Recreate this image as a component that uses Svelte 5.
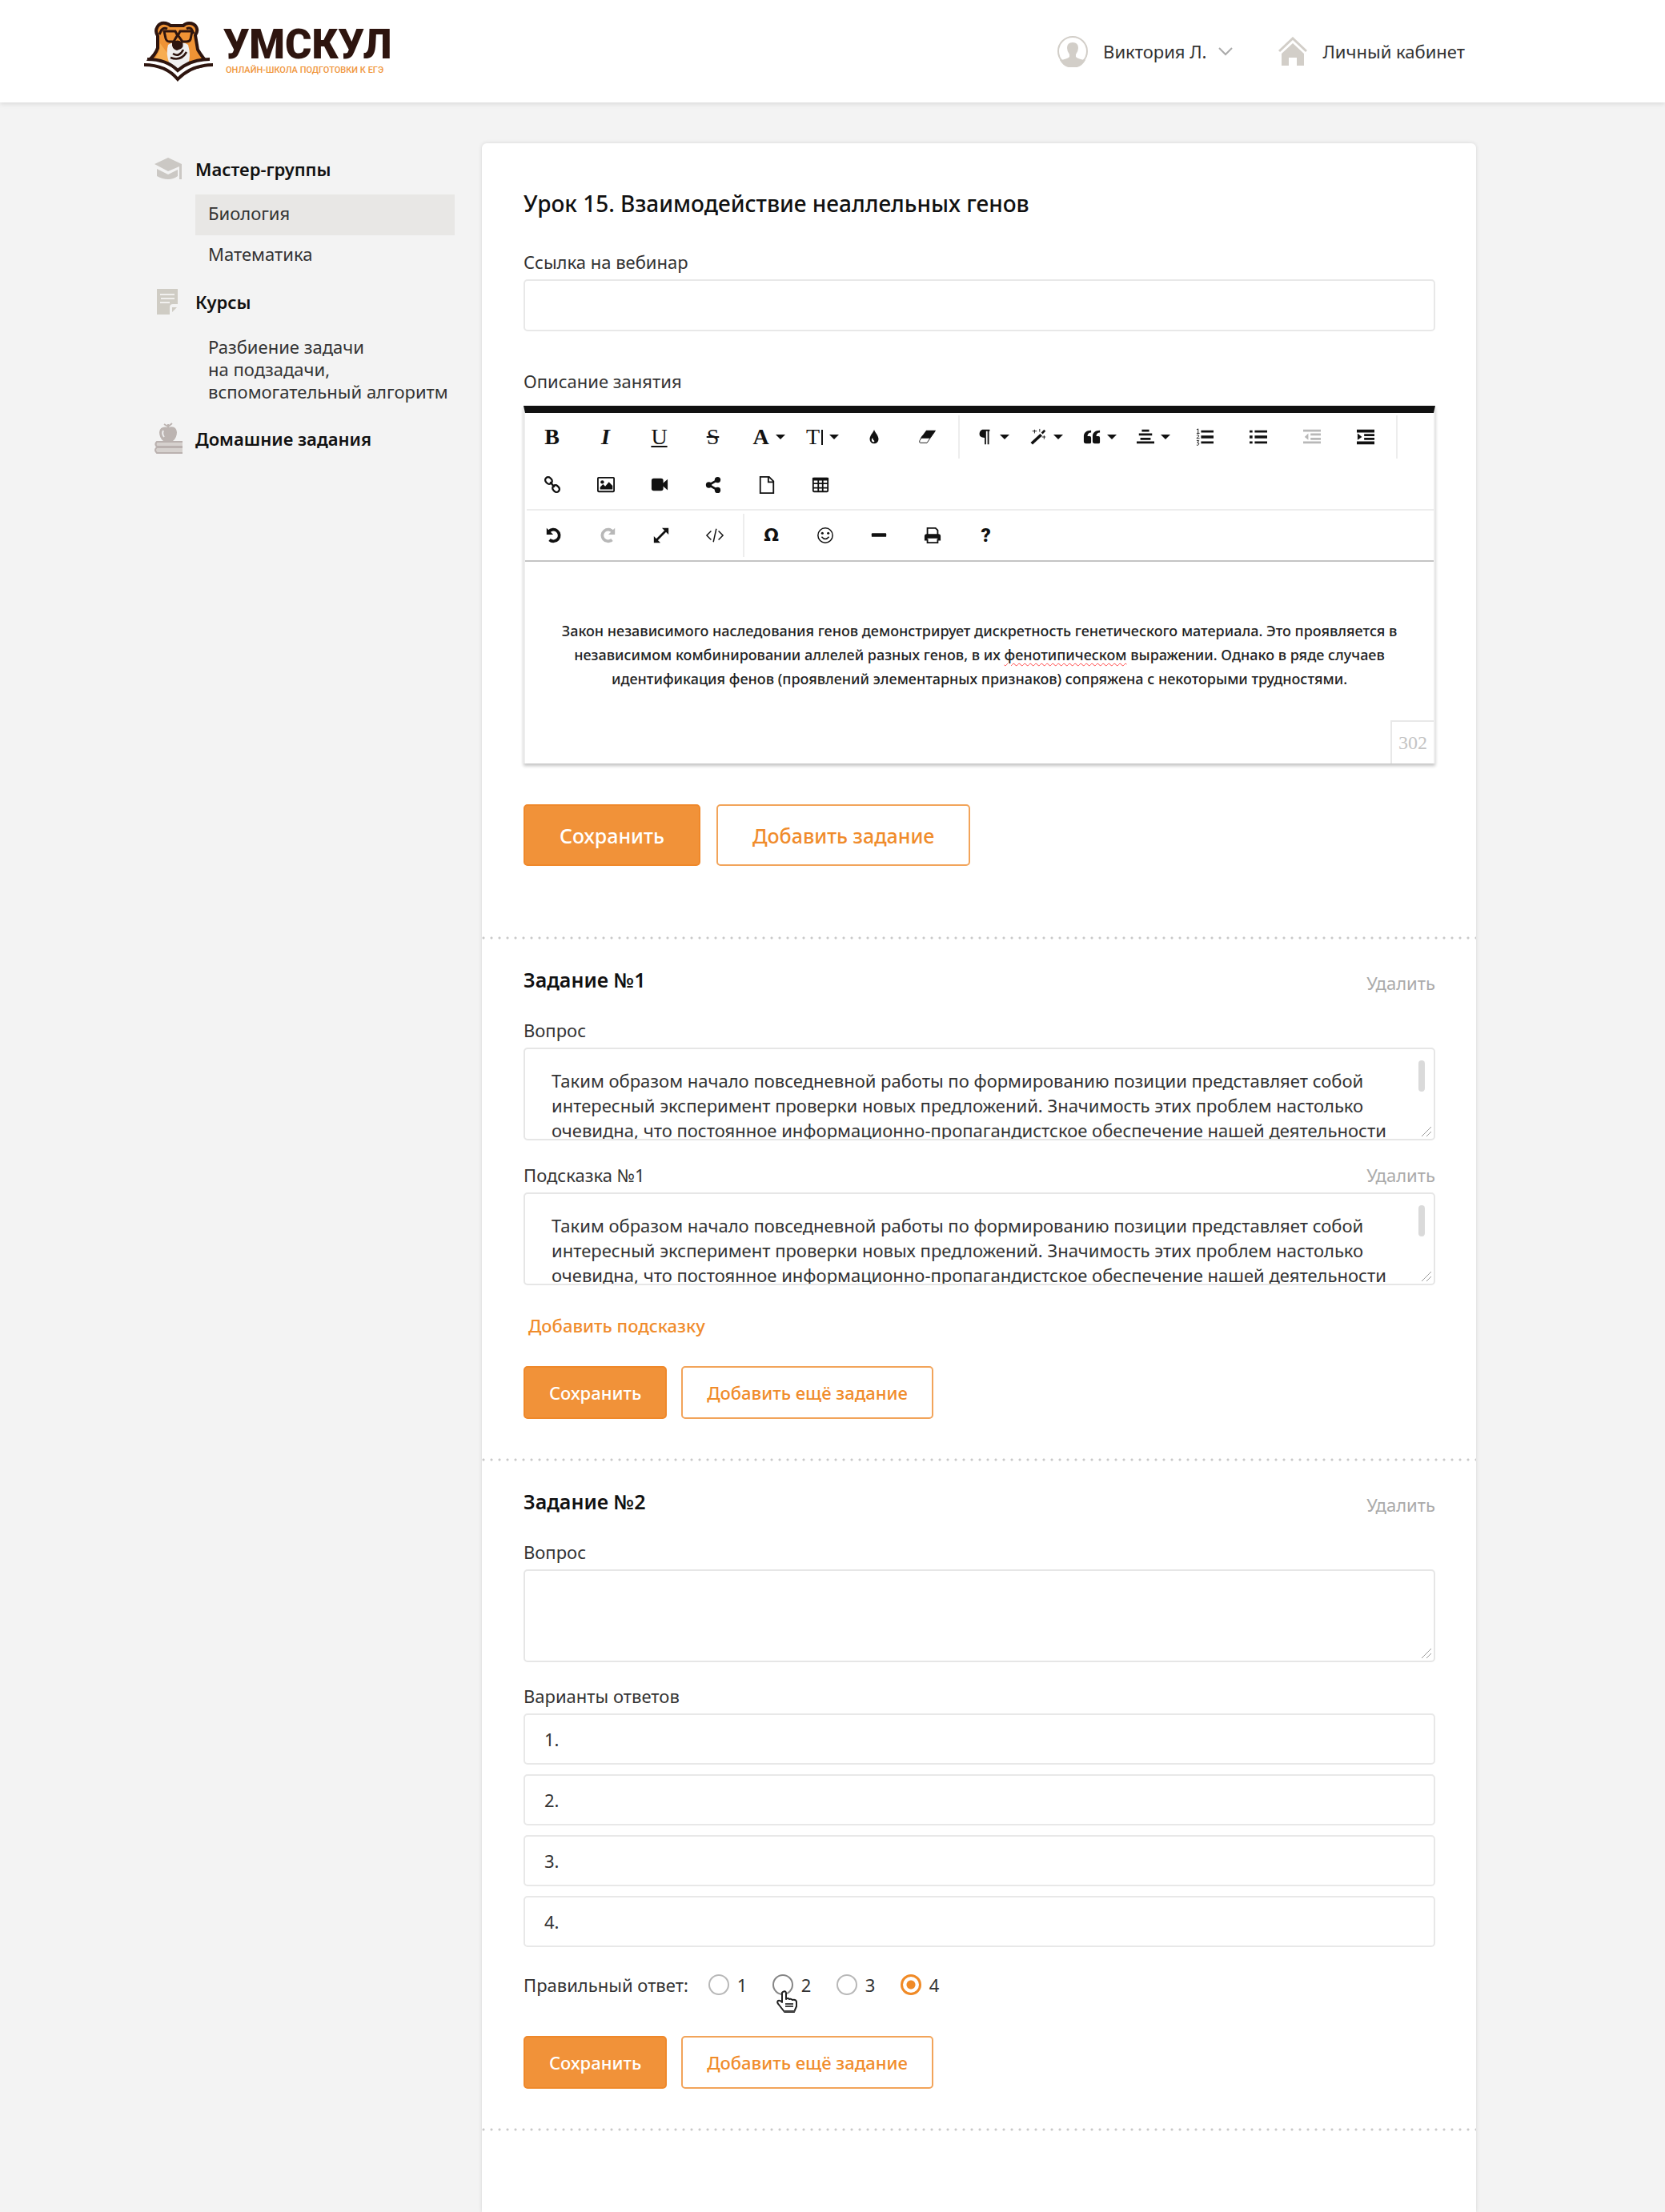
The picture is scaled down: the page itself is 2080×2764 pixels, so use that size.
<script>
  const rowOne = [
    { id: 'bold', label: 'Полужирный' },
    { id: 'italic', label: 'Курсив' },
    { id: 'underline', label: 'Подчёркнутый' },
    { id: 'strike', label: 'Зачёркнутый' },
    { id: 'font', label: 'Шрифт', menu: true },
    { id: 'size', label: 'Размер шрифта', menu: true },
    { id: 'drop', label: 'Цвет' },
    { id: 'eraser', label: 'Очистить' },
    { id: 'sep' },
    { id: 'para', label: 'Формат абзаца', menu: true },
    { id: 'wand', label: 'Стиль абзаца', menu: true },
    { id: 'quote', label: 'Цитата', menu: true },
    { id: 'align', label: 'Выравнивание', menu: true },
    { id: 'ol', label: 'Нумерованный список' },
    { id: 'ul', label: 'Маркированный список' },
    { id: 'outdent', label: 'Уменьшить отступ', off: true },
    { id: 'indent', label: 'Увеличить отступ' },
    { id: 'sep' }
  ];
  const rowTwo = [
    { id: 'link', label: 'Ссылка' },
    { id: 'image', label: 'Изображение' },
    { id: 'video', label: 'Видео' },
    { id: 'share', label: 'Встроить' },
    { id: 'file', label: 'Файл' },
    { id: 'table', label: 'Таблица' }
  ];
  const rowThree = [
    { id: 'undo', label: 'Отменить' },
    { id: 'redo', label: 'Повторить', off: true },
    { id: 'expand', label: 'На весь экран' },
    { id: 'code', label: 'HTML' },
    { id: 'sep', tight: true },
    { id: 'omega', label: 'Символы' },
    { id: 'smile', label: 'Смайлы' },
    { id: 'hr', label: 'Линия' },
    { id: 'print', label: 'Печать' },
    { id: 'help', label: 'Справка' }
  ];
  const letters = { bold: 'B', italic: 'I', underline: 'U', strike: 'S', font: 'A', size: 'T', omega: 'Ω', help: '?' };

  const sample =
    'Таким образом начало повседневной работы по формированию позиции представляет собой\nинтересный эксперимент проверки новых предложений. Значимость этих проблем настолько\nочевидна, что постоянное информационно-пропагандистское обеспечение нашей деятельности';

  let question1 = $state(sample);
  let hint1 = $state(sample);
  let question2 = $state('');
  let answers = $state(['', '', '', '']);
  let correct = $state(4);
</script>

{#snippet glyph(id)}
  {#if letters[id]}
    <span class="letter {id}">{letters[id]}{#if id === 'size'}<i></i>{/if}</span>
  {:else}
    <svg class="glyph" viewBox="0 0 24 24" aria-hidden="true">
      {#if id === 'drop'}
        <path fill-rule="evenodd" d="M12 2c1 4 6 8 6 13a6 6 0 0 1-12 0c0-5 5-9 6-13zM10 13c-2 2-2 5 1 6 1 0 2-1 1-2-1-1-2-2-2-4z" />
      {:else if id === 'eraser'}
        <path d="M10 3h13l-8 11H2z" /><path class="line thin" d="M5 10L1 17q-1 3 1 3h9l4-6 7-10" />
      {:else if id === 'para'}
        <path d="M10 2h9v2h-1v18h-2V4h-2v18h-2v-9C7 13 5 11 5 8s2-6 5-6z" />
      {:else if id === 'wand'}
        <path class="line heavy" d="M3 21L16 9" /><path class="line" d="M17 7l4-4" /><path class="line thin" d="M7 2v5M4 4h6M14 1v4M20 10v5M17 12h5" />
      {:else if id === 'quote'}
        <path d="M11 3v3C8 6 6 8 6 11h3q2 0 2 2v6q0 2-2 2H4q-3 0-3-3v-7c0-5 4-8 10-8zM23 3v3c-3 0-5 2-5 5h3q2 0 2 2v6q0 2-2 2h-5q-3 0-3-3v-7c0-5 4-8 10-8z" />
      {:else if id === 'align'}
        <path d="M7 2h10v3H7zM3 7h18v3H3zM5 13h14v3H5zM0 18h24v3H0z" />
      {:else if id === 'ol'}
        <path d="M7 3h17v3H7zM7 10h17v4H7zM7 18h17v3H7z" /><path class="line thin" d="M1 2l2-1v6M1 7h4M1 10q3-2 3 1l-3 3h4M1 17h3l-2 3q3 0 2 2t-3 1" />
      {:else if id === 'ul'}
        <path d="M7 3h17v3H7zM7 10h17v4H7zM7 18h17v3H7zM0 3h4v3H0zM0 10h4v4H0zM0 18h4v3H0z" />
      {:else if id === 'outdent'}
        <path d="M0 2h24v3H0zM10 7h14v3H10zM10 13h14v3H10zM0 18h24v3H0zM7 7v9l-5-4z" />
      {:else if id === 'indent'}
        <path d="M0 2h24v4H0zM10 8h14v3H10zM10 13h14v3H10zM0 18h24v4H0zM1 7v9l6-4z" />
      {:else if id === 'link'}
        <g class="line link"><rect x="-5" y="-4" width="10" height="8" rx="4" transform="translate(7 6) rotate(45)" /><rect x="-5" y="-4" width="10" height="8" rx="4" transform="translate(17 17) rotate(45)" /><path d="M9 8l6 7" /></g>
      {:else if id === 'image'}
        <rect class="line mid" x="1" y="2" width="22" height="19" rx="1" /><circle cx="7" cy="8" r="2.4" /><path d="M4 18v-3l4-4 3 3 5-6 5 5v5z" />
      {:else if id === 'video'}
        <rect x="1" y="3" width="16" height="17" rx="3" /><path d="M16 10l7-6v15l-7-6z" />
      {:else if id === 'share'}
        <circle cx="6" cy="12" r="4" /><circle cx="18" cy="5" r="4" /><circle cx="18" cy="19" r="4" /><path class="line" d="M18 5L6 12l12 7" />
      {:else if id === 'file'}
        <path class="line mid" d="M3 1h12l6 6v16H3zM14 1v7h7" />
      {:else if id === 'table'}
        <rect class="line mid" x="2" y="3" width="20" height="18" rx="1" /><path d="M1 2h22v4H1z" /><path class="line mid" d="M2 10h20M2 16h20M9 4v17M15 4v17" />
      {:else if id === 'undo'}
        <path class="line heavy" d="M5 7a8 8 0 1 1 1 11" /><path d="M2 2v9h9z" />
      {:else if id === 'redo'}
        <path class="line heavy" d="M19 7a8 8 0 1 0-1 11" /><path d="M22 2v9h-9z" />
      {:else if id === 'expand'}
        <path class="line" d="M5 19L19 5" /><path d="M13 2h9v9zM2 13v9h9z" />
      {:else if id === 'code'}
        <path class="line slim" d="M7 6l-6 6 6 6M17 6l6 6-6 6M14 3l-4 18" />
      {:else if id === 'smile'}
        <circle class="line slim" cx="12" cy="12" r="10" /><path class="line slim" d="M7 14q5 6 10 0" /><circle cx="8" cy="9" r="1.7" /><circle cx="16" cy="9" r="1.7" />
      {:else if id === 'hr'}
        <rect x="2" y="9" width="20" height="5" rx="1" />
      {:else if id === 'print'}
        <path class="line mid" d="M5 12V2h11l3 3v7M5 17v5h14v-5" /><path fill-rule="evenodd" d="M4 10h16q3 0 3 3v6h-4v-3H5v3H1v-6q0-3 3-3z" />
      {/if}
    </svg>
  {/if}
{/snippet}

{#snippet tools(list)}
  {#each list as t}
    {#if t.id === 'sep'}
      <span class="sep" class:tight={t.tight}></span>
    {:else}
      <button type="button" class="tool" class:menu={t.menu} disabled={t.off} aria-label={t.label}>
        {@render glyph(t.id)}
        {#if t.menu}<span class="caret"></span>{/if}
      </button>
    {/if}
  {/each}
{/snippet}

{#snippet grip()}
  <svg class="grip" viewBox="0 0 16 16" aria-hidden="true"><path d="M2 14L14 2M8 14l6-6" /></svg>
{/snippet}

<header class="top">
  <a class="logo" href="#home">
    <svg class="bear" viewBox="0 0 86 76" aria-hidden="true">
      <path d="M17 19C12 11 18 1 27 3q4 1 6 3h16q3-3 7-3c9 0 13 8 8 15l3 18q4 7 13 18L43 64 5 50q9-7 12-16z" fill="#ef9335" stroke="#2e150f" stroke-width="4" stroke-linejoin="round" />
      <path d="M20 28q1 12-10 23l14 6 16 6-9-20z" fill="#f7ad50" />
      <path d="M19 17l3-6q3-3 7-1M62 16l-3-6q-3-2-6 0" fill="none" stroke="#2e150f" stroke-width="3" />
      <path d="M30 30q6-5 13 0 6-5 12 0 4 14 0 24-5 10-11 10T31 52q-4-12-1-22z" fill="#f0efef" />
      <path d="M25 13h14l2 4h2l2-4h15l-2 10q-1 3-5 3h-5l-5-7h-2l-4 7h-5q-4 0-5-4z" fill="#ef9335" stroke="#2e150f" stroke-width="3" />
      <path d="M35 27q7-5 13 0 2 5-2 8l-5 2q-7-2-6-10z" fill="#2e150f" />
      <path d="M36 41q8 5 13-5M33 46q13 5 20-7" fill="none" stroke="#2e150f" stroke-width="2.5" />
      <path d="M1 50q25-3 41 12 18-15 43-12v5Q59 57 42 73 26 56 1 55z" fill="#fff" />
      <path d="M4 48q24 0 38 14 16-14 40-14M0 55q27 0 42 18 17-18 44-18" fill="none" stroke="#2e150f" stroke-width="4" />
    </svg>
    <span class="brand">
      <strong>УМСКУЛ</strong>
      <small>ОНЛАЙН-ШКОЛА ПОДГОТОВКИ К ЕГЭ</small>
    </span>
  </a>
  <nav class="account" aria-label="Аккаунт">
    <button type="button" class="user">
      <svg class="avatar" viewBox="0 0 40 40" aria-hidden="true">
        <circle cx="20" cy="20" r="18" fill="none" stroke="#d2cec8" stroke-width="2" />
        <path fill="#d2cec8" d="M4 31q9-1 12-4v-3q-3-4-3-8 0-7 7-7t7 7q0 4-3 8v3q3 3 12 4a18 18 0 0 1-32 0z" />
      </svg>
      <span>Виктория Л.</span>
      <svg class="chev" viewBox="0 0 18 12" aria-hidden="true"><path d="M1 2l8 8 8-8" fill="none" stroke="#aaa" stroke-width="2" /></svg>
    </button>
    <a class="cabinet" href="#cabinet">
      <svg class="house" viewBox="0 0 36 36" aria-hidden="true">
        <path d="M1 18L18 2l17 16" fill="none" stroke="#d2cec8" stroke-width="3" />
        <path d="M18 8l14 13v15h-9V26H13v10H4V21z" fill="#d2cec8" />
      </svg>
      <span>Личный кабинет</span>
    </a>
  </nav>
</header>

<div class="page">
  <nav class="side" aria-label="Разделы">
    <section class="group">
      <h2>
        <svg class="sico" viewBox="0 0 36 36" aria-hidden="true">
          <path fill="#cbc8c4" d="M18 4l17 8v19h-3V15l-14 6L1 12zM4 18l14 7 12-6v8q-5 4-12 4T4 27z" />
        </svg>
        Мастер-группы
      </h2>
      <a class="item current" href="#bio">Биология</a>
      <a class="item" href="#math">Математика</a>
    </section>
    <section class="group">
      <h2>
        <svg class="sico" viewBox="0 0 36 36" aria-hidden="true">
          <path fill="#cfccc4" d="M4 2h26v19h-6q-4 0-4 4v9H4zM23 25h6l-6 6z" />
          <path d="M8 9h18M9 14h17M8 19h12" stroke="#f1f0ee" stroke-width="2" />
        </svg>
        Курсы
      </h2>
      <a class="item multi" href="#course">Разбиение задачи<br />на подзадачи,<br />вспомогательный алгоритм</a>
    </section>
    <section class="group">
      <h2>
        <svg class="sico tall" viewBox="0 0 36 40" aria-hidden="true">
          <path fill="#bcb4b1" d="M18 6q10-3 11 6 0 7-5 11H12Q7 19 7 12 8 4 18 6z" />
          <path d="M18 6V2M13 2l5 3 5-4" fill="none" stroke="#bcb4b1" stroke-width="2" />
          <path d="M12 10q-2 4 1 8" fill="none" stroke="#eee" stroke-width="2" />
          <path fill="#d6d1ce" d="M3 24h33v14H3q-4-3 0-7-3-4 0-7z" />
          <path d="M36 24H4q-3 3 0 6h32M36 31H4q-4 3 0 7h32" fill="none" stroke="#bab1af" stroke-width="2" />
        </svg>
        Домашние задания
      </h2>
    </section>
  </nav>

  <main class="card">
    <section class="lesson">
      <h1>Урок 15. Взаимодействие неаллельных генов</h1>
      <label class="lab" for="webinar">Ссылка на вебинар</label>
      <input class="field" id="webinar" type="text" />
      <p class="lab desc" id="desc-label">Описание занятия</p>
      <div class="editor">
        <div class="toolbar" role="toolbar" aria-label="Форматирование">
          <div class="trow">{@render tools(rowOne)}</div>
          <div class="trow">{@render tools(rowTwo)}</div>
          <div class="trow last">{@render tools(rowThree)}</div>
        </div>
        <div class="area" role="textbox" tabindex="0" contenteditable="true" aria-labelledby="desc-label">
          Закон независимого наследования генов демонстрирует дискретность генетического материала. Это проявляется в<br />независимом комбинировании аллелей разных генов, в их <span class="typo">фенотипическом</span> выражении. Однако в ряде случаев<br />идентификация фенов (проявлений элементарных признаков) сопряжена с некоторыми трудностями.
        </div>
        <span class="count">302</span>
      </div>
      <div class="actions big">
        <button type="button" class="btn fill">Сохранить</button>
        <button type="button" class="btn">Добавить задание</button>
      </div>
    </section>

    <section class="task">
      <div class="head">
        <h2>Задание №1</h2>
        <button type="button" class="del">Удалить</button>
      </div>
      <label class="lab" for="q1">Вопрос</label>
      <div class="box"><textarea id="q1" bind:value={question1}></textarea><i class="thumb"></i>{@render grip()}</div>
      <div class="between">
        <label class="lab" for="h1">Подсказка №1</label>
        <button type="button" class="del">Удалить</button>
      </div>
      <div class="box"><textarea id="h1" bind:value={hint1}></textarea><i class="thumb"></i>{@render grip()}</div>
      <button type="button" class="addhint">Добавить подсказку</button>
      <div class="actions">
        <button type="button" class="btn fill">Сохранить</button>
        <button type="button" class="btn">Добавить ещё задание</button>
      </div>
    </section>

    <section class="task">
      <div class="head">
        <h2>Задание №2</h2>
        <button type="button" class="del">Удалить</button>
      </div>
      <label class="lab" for="q2">Вопрос</label>
      <div class="box"><textarea id="q2" bind:value={question2}></textarea>{@render grip()}</div>
      <p class="lab variants">Варианты ответов</p>
      <div class="answers">
        {#each answers as _, i}
          <label class="answer"><span>{i + 1}.</span><input type="text" bind:value={answers[i]} /></label>
        {/each}
      </div>
      <fieldset class="right">
        <legend>Правильный ответ:</legend>
        {#each [1, 2, 3, 4] as n}
          <label class="opt" class:hot={n === 2}>
            <input type="radio" name="right" value={n} bind:group={correct} />{n}
            {#if n === 2}
              <svg class="hand" viewBox="0 0 26 28" aria-hidden="true">
                <path d="M8 2q3-2 4 1v8q2-2 4 0 2-1 4 1 4-1 5 2v6l-3 7H10L3 18q-3-3-1-5 3-1 5 2V3z" fill="#fff" stroke="#222" stroke-width="2" stroke-linejoin="round" />
                <path d="M11 17h10M11 20h10M9 26h14" stroke="#444" stroke-width="2" fill="none" />
              </svg>
            {/if}
          </label>
        {/each}
      </fieldset>
      <div class="actions">
        <button type="button" class="btn fill">Сохранить</button>
        <button type="button" class="btn">Добавить ещё задание</button>
      </div>
    </section>
    <section class="task"></section>
  </main>
</div>

<style>
  :global(body) {
    background: #f3f3f3;
    color: #333;
    font: 22px/30px 'Noto Sans', 'Open Sans', sans-serif;
  }
  :global(#app) {
    display: flex;
    flex-direction: column;
    min-height: 100vh;
  }
  h1, h2, p, fieldset { margin: 0; padding: 0; border: 0; }
  a { color: inherit; text-decoration: none; }
  button, input, textarea { font: inherit; color: inherit; box-sizing: border-box; margin: 0; }
  button { background: none; border: 0; padding: 0; cursor: pointer; white-space: nowrap; }
  svg { display: block; flex: none; }

  .top {
    display: flex;
    align-items: center;
    justify-content: space-between;
    height: 128px;
    padding: 0 250px 0 180px;
    background: #fff;
    box-shadow: 0 2px 6px rgba(0, 0, 0, 0.1);
    box-sizing: border-box;
  }
  .logo { display: flex; gap: 13px; align-items: center; }
  .bear { width: 86px; height: 76px; }
  .brand { display: flex; flex-direction: column; }
  .brand strong { font: 900 51px/48px Roboto, sans-serif; color: #2e150f; }
  .brand small { font: 500 11px/16px Roboto, sans-serif; color: #f0963c; padding-left: 3px; }
  .account { display: flex; align-items: center; gap: 57px; }
  .user, .cabinet { display: flex; align-items: center; }
  .avatar { width: 40px; height: 40px; margin-right: 18px; }
  .chev { width: 18px; height: 12px; margin-left: 14px; }
  .house { width: 36px; height: 36px; margin-right: 20px; }

  .page {
    flex: 1;
    display: grid;
    grid-template-columns: 376px 1fr;
    gap: 34px;
    padding: 51px 236px 0 192px;
  }
  .side { display: flex; flex-direction: column; gap: 16px; padding-top: 16px; }
  .group { display: flex; flex-direction: column; }
  .side h2 {
    display: flex;
    align-items: center;
    gap: 16px;
    height: 32px;
    margin-bottom: 16px;
    font-size: 22px;
    font-weight: 600;
    color: #111;
  }
  .sico { width: 36px; height: 36px; }
  .sico.tall { height: 40px; }
  .item { margin-left: 52px; padding: 8px 16px 13px; }
  .item.current { background: #e8e7e5; }
  .item.multi { line-height: 28px; white-space: nowrap; padding: 10px 16px 13px; }

  .card {
    background: #fff;
    border-radius: 6px 6px 0 0;
    box-shadow: 0 0 5px rgba(0, 0, 0, 0.12);
    min-width: 0;
  }
  .lesson { padding: 55px 51px 88px 52px; }
  h1 { font-size: 28px; line-height: 40px; font-weight: 500; color: #111; margin-bottom: 38px; }
  .lab { display: block; margin-bottom: 7px; }
  .lab.desc { margin: 47px 0 16px; }
  .field { display: block; width: 100%; height: 65px; border: 2px solid #e8e8e8; border-radius: 5px; padding: 0 24px; background: #fff; }

  .editor { position: relative; border: 2px solid #ededed; border-top: 9px solid #111; border-bottom: 0; box-shadow: 0 3px 4px rgba(0, 0, 0, 0.24); margin-bottom: 51px; }
  .toolbar { border-bottom: 2px solid #c4c4c4; }
  .trow { display: flex; align-items: center; height: 60px; color: #111; }
  .trow.last { height: 64px; margin-left: 2px; border-top: 2px solid #ededed; box-sizing: border-box; }
  .tool { display: flex; align-items: center; justify-content: center; width: 67px; height: 54px; }
  .tool:disabled { color: #b8b8b8; }
  .tool.menu { padding-left: 6px; gap: 8px; box-sizing: border-box; }
  .sep { width: 2px; height: 54px; margin: 0 4px 0 5px; background: #ededed; }
  .sep.tight { margin: 0 0 0 2px; }
  .caret { border: 6px solid transparent; border-top-color: currentColor; border-bottom: 0; }
  .glyph { width: 22px; height: 22px; fill: currentColor; overflow: visible; }
  .glyph .line { fill: none; stroke: currentColor; stroke-width: 3; }
  .glyph .heavy { stroke-width: 4; }
  .glyph .mid { stroke-width: 2; }
  .glyph .link { stroke-width: 2.5; }
  .glyph .slim { stroke-width: 1.6; }
  .glyph .thin { stroke-width: 1; }
  .letter { font: 700 28px/30px 'Liberation Serif', serif; }
  .italic { font-style: italic; }
  .underline { font-weight: 400; text-decoration: underline; }
  .strike { font-weight: 400; text-decoration: line-through; }
  .size { display: flex; align-items: center; gap: 2px; font-weight: 400; }
  .size i { width: 2px; height: 19px; background: currentColor; }
  .omega { font: 700 22px/30px 'DejaVu Sans', sans-serif; }
  .help { font: 900 24px/30px Roboto, sans-serif; }
  .area { padding: 71px 40px 91px; font-size: 18px; font-weight: 500; line-height: 30px; text-align: center; color: #222; outline: 0; }
  .typo { text-decoration: underline wavy #f44 1px; text-underline-offset: 3px; }
  .count { position: absolute; right: 0; bottom: 0; width: 52px; height: 52px; border: 2px solid #e8e8e8; border-width: 2px 0 0 2px; font: 24px/52px 'Liberation Serif', serif; text-align: center; color: #c4c4c4; }

  .actions { display: flex; gap: 18px; }
  .btn { height: 66px; padding: 0 30px; border: 2px solid #f2a45a; border-radius: 5px; color: #f08c2c; font-weight: 500; }
  .btn.fill { background: #f19239; border-color: #ef882a; color: #fff; }
  .big { gap: 20px; }
  .big .btn { height: 77px; padding: 0 43px; font-size: 25px; }

  .task { padding: 36px 51px 49px 52px; background: radial-gradient(circle at 2px 2px, #c9c9c9 1px, transparent 2px) 0 0 / 10px 4px repeat-x; }
  .head, .between { display: flex; justify-content: space-between; }
  .head { align-items: center; margin-bottom: 30px; }
  .head h2 { font-size: 25px; line-height: 36px; font-weight: 600; color: #111; }
  .head .del { padding-top: 4px; }
  .between { margin-top: 28px; }
  .del { height: 30px; color: #aaa; }
  .box { position: relative; }
  textarea { display: block; width: 100%; height: 116px; padding: 24px 33px 0; border: 2px solid #e6e6e6; border-radius: 5px; line-height: 31px; resize: none; overflow: hidden; background: #fff; white-space: pre; }
  .thumb { position: absolute; top: 16px; right: 13px; width: 8px; height: 39px; border-radius: 4px; background: #dadada; }
  .grip { position: absolute; right: 3px; bottom: 3px; width: 16px; height: 16px; fill: none; stroke: #999; stroke-width: 1; }
  .addhint { display: block; margin: 35px 0 36px 6px; color: #f08c2c; font-weight: 500; }
  .variants { margin-top: 27px; }
  .answers { display: flex; flex-direction: column; gap: 12px; }
  .answer { display: flex; align-items: center; height: 64px; padding-left: 24px; gap: 12px; border: 2px solid #e8e8e8; border-radius: 5px; box-sizing: border-box; }
  .answer input { flex: 1; height: 100%; border: 0; background: none; outline: 0; }
  .right { display: flex; align-items: center; gap: 25px; height: 30px; margin: 32px 0 49px; }
  .right legend { float: left; padding: 0; }
  .opt { position: relative; display: flex; align-items: center; gap: 10px; width: 55px; white-space: nowrap; }
  .opt input { appearance: none; flex: none; width: 26px; height: 26px; border: 2px solid #b8b8b8; border-radius: 50%; }
  .opt.hot input { border-color: #858585; }
  .opt input:checked { border: 3px solid #f08a26; background: radial-gradient(circle, #f08a26 5px, transparent 6px); }
  .hand { position: absolute; left: 5px; top: 22px; width: 26px; height: 28px; }
</style>
